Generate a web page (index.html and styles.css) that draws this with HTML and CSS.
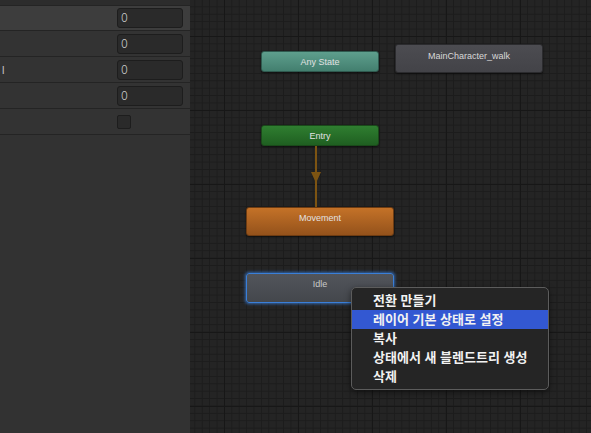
FILE: index.html
```html
<!DOCTYPE html>
<html lang="ko">
<head>
<meta charset="utf-8">
<link rel="stylesheet" href="styles.css">
</head>
<body>
<div class="app">
  <aside class="inspector">
    <div class="topstrip"></div>
    <div class="row row-hover"><span class="label"></span><div class="field">0</div></div>
    <div class="row"><span class="label"></span><div class="field">0</div></div>
    <div class="row"><span class="label">l</span><div class="field">0</div></div>
    <div class="row"><span class="label"></span><div class="field">0</div></div>
    <div class="row"><span class="label"></span><div class="check"></div></div>
  </aside>
  <main class="canvas">
    <div class="node node-any">Any State</div>
    <div class="node node-clip">MainCharacter_walk</div>
    <div class="node node-entry">Entry</div>
    <svg class="link" width="12" height="62" viewBox="0 0 12 62">
      <rect x="5" y="0" width="2" height="62" fill="#7d5412"/>
      <polygon points="1,26 11,26 6,37" fill="#7d5412"/>
    </svg>
    <div class="node node-move">Movement</div>
    <div class="node node-idle">Idle</div>
    <ul class="menu">
      <li>전환 만들기</li>
      <li class="active">레이어 기본 상태로 설정</li>
      <li>복사</li>
      <li>상태에서 새 블렌드트리 생성</li>
      <li>삭제</li>
    </ul>
  </main>
</div>
</body>
</html>
```

FILE: styles.css
```css
* { box-sizing: border-box; }
html, body { margin: 0; padding: 0; height: 100%; }
body {
  font-family: "Liberation Sans", Arial, sans-serif;
  background: #232323;
  overflow: hidden;
}
.app {
  display: flex;
  width: 591px;
  height: 433px;
}
.inspector {
  width: 190px;
  flex: none;
  background: #323232;
  display: flex;
  flex-direction: column;
}
.topstrip {
  height: 6px;
  background: #2c2c2c;
  border-bottom: 1px solid #242424;
}
.row {
  height: 26px;
  display: flex;
  align-items: center;
  justify-content: space-between;
  padding: 0 7px 0 2px;
  background: #333333;
  border-bottom: 1px solid #242424;
}
.row-hover { background: #3d3d3d; height: 25px; }
.label {
  color: #c4c4c4;
  font-size: 11px;
}
.field {
  width: 66px;
  height: 20px;
  background: #2a2a2a;
  border: 1px solid #1d1d1d;
  border-radius: 3px;
  color: #c8c8c8;
  font-family: "Inter", "Liberation Sans", sans-serif;
  font-weight: 300;
  font-size: 11px;
  line-height: 18px;
  padding-left: 3px;
}
.check {
  width: 14px;
  height: 14px;
  margin-right: 52px;
  background: #2a2a2a;
  border: 1px solid #1d1d1d;
  border-radius: 2px;
}
.canvas {
  position: relative;
  flex: 1;
  background-color: #242424;
  background-image:
    linear-gradient(to right, #171717 1px, transparent 1px),
    linear-gradient(to bottom, #171717 1px, transparent 1px),
    linear-gradient(to right, #1c1c1c 1px, transparent 1px),
    linear-gradient(to bottom, #1c1c1c 1px, transparent 1px);
  background-size: 74px 74px, 74px 74px, 7.4px 7.4px, 7.4px 7.4px;
  background-position: 34px 36px, 34px 36px, 4.4px 6.4px, 4.4px 6.4px;
}
.node {
  position: absolute;
  border-radius: 3px;
  color: #e2e2e2;
  font-size: 9px;
  text-align: center;
  box-shadow: 0 1px 2px rgba(0,0,0,0.6);
}
.node-any {
  left: 71px; top: 51px; width: 118px; height: 21px;
  line-height: 21px;
  background: linear-gradient(#5e9f8d, #437f6f);
  border: 1px solid #2f5a4f;
}
.node-clip {
  left: 205px; top: 44px; width: 148px; height: 29px;
  padding-top: 5px; line-height: 12px;
  background: linear-gradient(#4c4c51, #434348);
  border: 1px solid #2b2b2e;
  color: #d8d8d8;
}
.node-entry {
  left: 71px; top: 125px; width: 118px; height: 21px;
  line-height: 20px;
  background: linear-gradient(#2f7e30, #1f5f21);
  border: 1px solid #1a4a1a;
}
.link {
  position: absolute;
  left: 120px; top: 146px;
}
.node-move {
  left: 56px; top: 207px; width: 148px; height: 29px;
  padding-top: 4px; line-height: 12px;
  background: linear-gradient(#c47228, #94521b);
  border: 1px solid #6e3c12;
}
.node-idle {
  left: 56px; top: 273px; width: 148px; height: 30px;
  padding-top: 4px; line-height: 12px;
  background: linear-gradient(#52555b, #44474c);
  border: 1px solid #3a7fd8;
  box-shadow: 0 0 3px 1px rgba(60,130,225,0.7);
  color: #c9c9c9;
}
.menu {
  position: absolute;
  left: 161px; top: 287px;
  width: 198px;
  margin: 0;
  padding: 3px 0;
  list-style: none;
  background: #252525;
  border: 1px solid #5c5c5c;
  border-radius: 5px;
  box-shadow: 0 2px 6px rgba(0,0,0,0.5);
  font-family: "Noto Sans CJK KR", "Noto Sans", sans-serif;
  font-size: 13px;
  font-weight: 700;
  color: #f2f2f2;
}
.menu li {
  height: 19px;
  line-height: 17px;
  padding-left: 21px;
}
.menu li.active {
  background: #3358d2;
}
```
